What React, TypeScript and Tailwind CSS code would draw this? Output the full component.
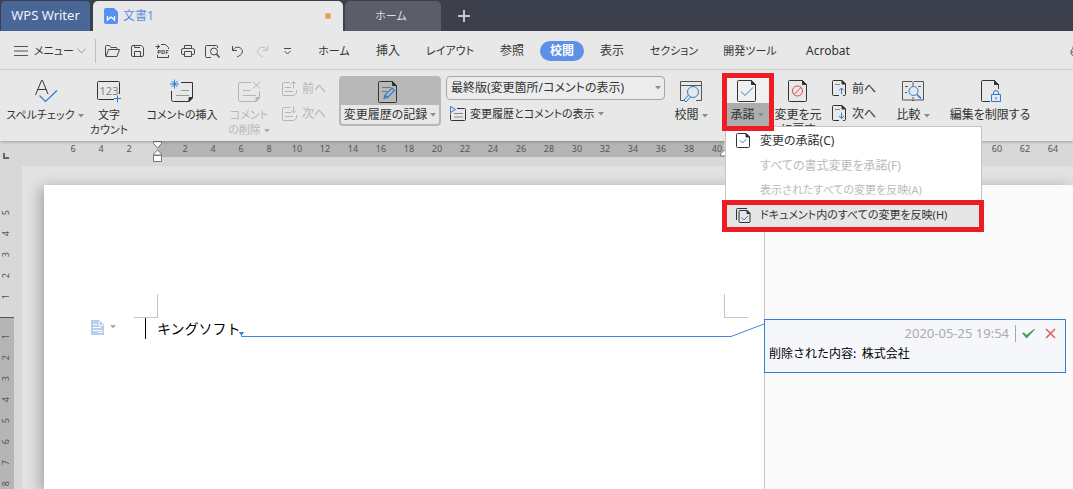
import type { ReactNode } from 'react';
import clsx from 'clsx';

const menus = [
  { label: 'ホーム', width: 'w-[56px]', small: true },
  { label: '挿入', width: 'w-[52px]' },
  { label: 'レイアウト', width: 'w-[72px]', small: true },
  { label: '参照', width: 'w-[52px]' },
  { label: '校閲', width: 'w-[44px]', active: true },
  { label: '表示', width: 'w-[52px]' },
  { label: 'セクション', width: 'w-[72px]', small: true },
  { label: '開発ツール', width: 'w-[80px]', small: true },
  { label: 'Acrobat', width: 'w-[76px]' },
];

// ruler labels, every second character; the stretch under the open menu stays blank
const rulerMarks = Array.from({ length: 36 }, (_, i) => i * 2 - 6).map((n) =>
  n === 0 || (n > 40 && n < 60) ? null : Math.abs(n),
);

type IconProps = { w?: number; h?: number; className?: string; children: ReactNode };

function Icon({ w = 24, h = 24, className, children }: IconProps) {
  return (
    <svg
      width={w}
      height={h}
      viewBox={`0 0 ${w} ${h}`}
      fill="none"
      stroke="currentColor"
      className={clsx('shrink-0 overflow-visible', className)}
      aria-hidden="true"
    >
      {children}
    </svg>
  );
}

function Caret({ className }: { className?: string }) {
  return (
    <svg width="6" height="4" viewBox="0 0 6 4" className={clsx('ml-[3px] inline-block shrink-0 align-middle', className)} aria-hidden="true">
      <path d="M0 0h6L3 3.5z" fill="#8c8c8c" />
    </svg>
  );
}

function DocOutline() {
  return (
    <>
      <path d="M3.5 1.5h13l4 4v16q0 1-1 1h-16q-1 0-1-1v-19q0-1 1-1z" />
      <path d="M16.5 1.500v4h4z" fill="currentColor" />
    </>
  );
}

function NoteOutline() {
  return (
    <>
      <path d="M11 3.500H22.500V19l-3.500 3.500H3.500q-2 0-2-2V12" />
      <path d="M22.500 18.500h-3.500v4z" fill="currentColor" />
      <path d="M11 11.500h8M6 16.500h13" stroke="#999" />
    </>
  );
}

type ToolProps = {
  icon: ReactNode;
  lines: string[];
  width: string;
  caret?: boolean;
  disabled?: boolean;
  small?: boolean;
};

function Tool({ icon, lines, width, caret, disabled, small }: ToolProps) {
  return (
    <button
      type="button"
      disabled={disabled}
      className={clsx('flex shrink-0 flex-col items-center gap-1 pt-[3px]', width, disabled && 'text-[#b5b5b5]')}
    >
      {icon}
      <span className={clsx('leading-[15px] whitespace-nowrap', small && 'text-[11px]')}>
        {lines.map((line, i) => (
          <span key={line} className="block">
            {line}
            {caret && i === lines.length - 1 && <Caret className={disabled ? 'opacity-60' : ''} />}
          </span>
        ))}
      </span>
    </button>
  );
}

function StepButton({ icon, label, disabled }: { icon: ReactNode; label: string; disabled?: boolean }) {
  return (
    <button type="button" disabled={disabled} className={clsx('flex h-[25px] items-center gap-1 whitespace-nowrap', disabled && 'text-[#b5b5b5]')}>
      {icon}
      {label}
    </button>
  );
}

function TabBar() {
  return (
    <header className="flex h-[31px] shrink-0 items-stretch bg-[#3c404c] pt-px text-[13px]">
      <button type="button" className="ml-px w-[89px] rounded-t-sm bg-[#486797] text-[#f0f4fa]">WPS Writer</button>
      <div className="ml-[3px] flex w-[250px] items-center rounded-t-[5px] bg-[#e8e8e8] pr-3 pl-[11px] text-[#5a8ce0]">
        <Icon w={14} h={16}>
          <path d="M2 0h8l4 4v10a2 2 0 0 1-2 2H2a2 2 0 0 1-2-2V2a2 2 0 0 1 2-2z" fill="#5690f2" stroke="none" />
          <path d="M3.500 8v4l3.500-3 3.500 3V8" stroke="#fff" strokeWidth="1.3" />
        </Icon>
        <span className="ml-[5px] text-[12px]">文書1</span>
        <span className="ml-auto size-[6px] rounded-full bg-[#e9a057]" />
      </div>
      <button type="button" className="ml-[2px] w-[96px] rounded-t-[5px] bg-[#5b5d68] pr-1 text-[11px] text-[#dcdde0]">ホーム</button>
      <button type="button" aria-label="新規" className="ml-4 text-[#c6c7cb]">
        <Icon w={14} h={14}>
          <path d="M7 1v12M1 7h12" strokeWidth="2" />
        </Icon>
      </button>
    </header>
  );
}

function QuickIcons() {
  return (
    <div className="flex text-[#4a4a4a] [&>button]:flex [&>button]:h-6 [&>button]:w-[25px] [&>button]:items-center [&>button]:justify-center">
      <button type="button" aria-label="開く">
        <Icon w={15} h={12}>
          <path d="M1 11.500L.5 10V1.500q0-1 1-1h3l1.500 2h5q1 0 1 1v1M1 11.500l2.500-7h11l-2.500 7z" strokeLinejoin="round" />
        </Icon>
      </button>
      <button type="button" aria-label="保存">
        <Icon w={13} h={12}>
          <path d="M.5 2q0-1.500 1.500-1.500h8.500l2 2V10q0 1.500-1.500 1.500H2Q.5 11.500.5 10zM3.500.5v2h5.500M3.500 11.500v-5h6v5" />
        </Icon>
      </button>
      <button type="button" aria-label="PDF">
        <Icon w={13} h={14}>
          <path d="M1.500 5V3.500M-.5 2.500h4M1.500.500l2 2-2 2M5 .5h4.500l3 3V5M1.500 11v2.500h11V11" />
          <text x="7" y="10" textAnchor="middle" fontSize="6" fontWeight="700" fontFamily="Noto Sans, sans-serif" fill="currentColor" stroke="none">PDF</text>
        </Icon>
      </button>
      <button type="button" aria-label="印刷">
        <Icon w={13} h={13}>
          <path d="M3.500 3.500v-3h7v3M3 9.500H2Q.5 9.500.5 8V5q0-1.500 1.500-1.500h9.500Q13.500 3.500 13.500 5v3q0 1.500-1.500 1.500h-1M3.500 6.500h7v5h-7z" />
        </Icon>
      </button>
      <button type="button" aria-label="印刷プレビュー">
        <Icon w={15} h={13}>
          <path d="M6 12.500H1.500q-1 0-1-1v-10q0-1 1-1h10q1 0 1 1V3" />
          <circle cx="9" cy="6.500" r="3.500" />
          <path d="M11.500 9l3 3.500" strokeWidth="1.400" />
        </Icon>
      </button>
      <button type="button" aria-label="元に戻す">
        <Icon w={13} h={13}>
          <path d="M1.500 1v4.500H6M1.500 5.500C4 1.500 8 1.500 10 3.500c3 3 1 6.500-4 8.500" />
        </Icon>
      </button>
      <button type="button" aria-label="やり直し" className="text-[#bcbcbc]">
        <Icon w={13} h={13}>
          <path d="M11.500 1v4.500H7M11.500 5.500C9 1.500 5 1.500 3 3.500c-3 3-1 6.500 4 8.500" />
        </Icon>
      </button>
      <button type="button" aria-label="その他">
        <Icon w={7} h={7}>
          <path d="M0 .5h7M.5 3l3 3 3-3" />
        </Icon>
      </button>
    </div>
  );
}

function MenuBar() {
  return (
    <nav className="flex h-[39px] shrink-0 items-center overflow-hidden border-b border-[#d6d6d6] bg-[#e8e8e8] pt-[2px] whitespace-nowrap">
      <button type="button" className="flex w-[95px] shrink-0 items-center pl-[14px]">
        <Icon w={14} h={10} className="text-[#555]">
          <path d="M0 .5h14M0 5h14M0 9.500h14" />
        </Icon>
        <span className="ml-[6px] w-[37px] text-left text-[11px]">メニュー</span>
        <Icon w={9} h={6} className="ml-[6px] text-[#999]">
          <path d="M.5.5l4 4.500 4-4.500" />
        </Icon>
      </button>
      <span className="mr-1 h-6 w-px bg-[#bdbdbd]" />
      <QuickIcons />
      <div className="ml-[6px] flex items-center">
        {menus.map((m) => (
          <button
            key={m.label}
            type="button"
            className={clsx(
              'h-5 shrink-0',
              m.width,
              m.small && 'text-[11px]',
              m.active && 'mx-[2px] rounded-full bg-[#5d90e6] font-bold text-white',
            )}
          >
            {m.label}
          </button>
        ))}
      </div>
      <button type="button" aria-label="同期" className="ml-auto w-[3px] shrink-0 overflow-hidden text-[#555]">
        <Icon w={14} h={14}>
          <path d="M4.500 12A4 4 0 0 1 3 4.500 4 4 0 0 1 11 4M1 8h5" />
        </Icon>
      </button>
    </nav>
  );
}

function AcceptMenu() {
  const items = [
    { label: '変更の承諾(C)', icon: 'single' },
    { label: 'すべての書式変更を承諾(F)', disabled: true },
    { label: '表示されたすべての変更を反映(A)', disabled: true, small: true },
    { label: 'ドキュメント内のすべての変更を反映(H)', icon: 'multi', small: true },
  ];
  return (
    <div role="menu" className="absolute top-[50px] left-0 z-20 w-[257px] border border-[#c4c4c4] bg-white pt-px pb-[3px]">
      {items.map((item) => (
        <button
          key={item.label}
          type="button"
          role="menuitem"
          disabled={item.disabled}
          className={clsx(
            'relative flex h-[25px] w-full items-center pl-[10px] text-left whitespace-nowrap',
            item.small && 'text-[11px]',
            item.disabled && 'text-[#bababa]',
            item.icon === 'multi' && 'bg-[#e6e6e6]',
          )}
        >
          <span className="w-6">
            {item.icon && (
              <Icon w={15} h={15} className="text-[#333]">
                {item.icon === 'single' ? (
                  <>
                    <path d="M1.500.5H10l3.500 3.500v9.500q0 1-1 1h-11q-1 0-1-1v-12q0-1 1-1z" />
                    <path d="M10 .5v3.500h3.500z" fill="currentColor" />
                    <path d="M4 7.500l2.500 2.500 4-4" stroke="#2b7cd3" />
                  </>
                ) : (
                  <>
                    <path d="M.5 12V1.500q0-1 1-1H11M4 2.500h7l3 3v8q0 1-1 1H4q-1 0-1-1v-10q0-1 1-1z" />
                    <path d="M11 2.500v3h3z" fill="currentColor" />
                    <path d="M5.500 9.500l2.500 2.500 4-4" stroke="#2b7cd3" />
                  </>
                )}
              </Icon>
            )}
          </span>
          {item.label}
          {item.icon === 'multi' && (
            <span className="pointer-events-none absolute top-[-3px] left-[-4px] h-8 w-[262px] border-[5px] border-[#ee1c25]" />
          )}
        </button>
      ))}
    </div>
  );
}

function StepDoc() {
  return (
    <>
      <path d="M8 15.500H2.500q-1 0-1-1v-13q0-1 1-1H11l3.500 3.500v10.500q0 1-1 1H12" />
      <path d="M11 .5v3.500h3.500z" fill="currentColor" />
      <path d="M4 4.500h5" stroke="#888" />
    </>
  );
}

function Ribbon() {
  return (
    <section className="relative z-10 flex h-[71px] shrink-0 items-start bg-[#e8e8e8] pt-[6px] pl-[5px] shadow-[0_1px_3px_rgba(0,0,0,0.25)]">
      <Tool
        width="w-[80px]"
        caret
        small
        lines={['スペルチェック']}
        icon={
          <Icon>
            <path d="M2.500 16L8.500 1.500h1L15 15M4.500 10.500h8.500" />
            <path d="M6.500 16.500l6 6L24 11.500" stroke="#2b7cd3" strokeWidth="1.200" />
          </Icon>
        }
      />
      <Tool
        width="w-[48px]"
        small
        lines={['文字', 'カウント']}
        icon={
          <Icon>
            <path d="M17 20.500H1.500q-1 0-1-1V3.500q0-1 1-1h20q1 0 1 1V15" />
            <text x="12" y="16" textAnchor="middle" fontSize="11" fontFamily="Noto Sans, sans-serif" fill="#858585" stroke="none">123</text>
            <path d="M20.500 16.500v7M17 19.500h7" stroke="#2b7cd3" />
          </Icon>
        }
      />
      <div className="ml-1 flex">
        <Tool
          width="w-[90px]"
          small
          lines={['コメントの挿入']}
          icon={
            <Icon>
              <NoteOutline />
              <path d="M4.500.5v9M0 5h9M1.500 2l6 6M7.500 2l-6 6" stroke="#2b7cd3" />
            </Icon>
          }
        />
        <Tool
          width="w-[44px]"
          small
          lines={['コメント', 'の削除']}
          caret
          disabled
          icon={
            <Icon>
              <path d="M14 3.500H2.500q-1 0-1 1V20.500q0 2 2 2H19l3.500-3.500V12" />
              <path d="M22.500 18.500h-3.500v4z" fill="currentColor" />
              <path d="M6 11.500h8M6 16.500h13M16 2.500l7 7M23 2.500l-7 7" />
            </Icon>
          }
        />
      </div>
      <div className="ml-[10px] w-[46px] shrink-0">
        <StepButton
          disabled
          label="前へ"
          icon={
            <Icon w={17} h={16}>
              <path d="M9 1.500H2.500q-1 0-1 1v11q0 1 1 1H13l2.500-2.500V9M4 6.500h6M4 10.500h8M12.500 7.500v-7M10 3L12.500.5 15 3" />
            </Icon>
          }
        />
        <StepButton
          disabled
          label="次へ"
          icon={
            <Icon w={17} h={16}>
              <path d="M9 1.500H2.500q-1 0-1 1v11q0 1 1 1H13l2.500-2.500V9M4 6.500h6M4 10.500h8M12.500 0v6.500M10 4.500l2.500 2.500L15 4.500" />
            </Icon>
          }
        />
      </div>
      <button type="button" aria-pressed="true" className="ml-3 flex h-[50px] w-[102px] shrink-0 flex-col items-center rounded-[4px] border-2 border-[#b8b8b8] bg-[#b8b8b8]">
        <span className="flex h-[27px] items-center pr-1">
          <Icon>
            <DocOutline />
            <path d="M6 7.500h9M6 11.500h5" stroke="#777" />
            <path d="M8 18.500l1-3.500 7-7 2.500 2.500-7 7zM9 15l2.500 2.500" stroke="#2b7cd3" strokeWidth="1.200" />
          </Icon>
        </span>
        <span className="flex w-full flex-1 items-center justify-center rounded-b-[2px] bg-[#e8e8e8] whitespace-nowrap">
          変更履歴の記録
          <Caret />
        </span>
      </button>
      <div className="ml-[5px] w-[219px] shrink-0">
        <div className="relative">
          <select aria-label="表示モード" className="block h-6 w-full appearance-none rounded-[4px] border border-[#a6a6a6] bg-[#ececec] pl-[4px]">
            <option>最終版(変更箇所/コメントの表示)</option>
          </select>
          <Caret className="pointer-events-none absolute top-[10px] right-[4px]" />
        </div>
        <button type="button" className="mt-[2px] flex h-6 items-center pl-[3px] text-[11px] whitespace-nowrap">
          <Icon w={17} h={16} className="mr-1">
            <path d="M8 2.500h7.500q1 0 1 1v10q0 1-1 1h-13q-1 0-1-1V9" />
            <path d="M5 7.500h9M5 11h9" stroke="#888" />
            <path d="M1.500 9V.5L6.500 3.500l-5 3" stroke="#2b7cd3" />
          </Icon>
          変更履歴とコメントの表示
          <Caret className="ml-1" />
        </button>
      </div>
      <div className="ml-2 flex">
        <Tool
          width="w-[36px]"
          caret
          lines={['校閲']}
          icon={
            <Icon>
              <path d="M5 21.500H1.500v-19h21v19H17M1.500 6.500h21" stroke="#555" />
              <circle cx="14" cy="13" r="5.500" stroke="#2b7cd3" />
              <path d="M9.500 16l-4.500 5 2 2 4.500-5" stroke="#2b7cd3" />
            </Icon>
          }
        />
      </div>
      <div className="relative ml-4 h-[50px] w-[44px] shrink-0">
        <button type="button" aria-haspopup="menu" aria-expanded="true" className="flex h-full w-full flex-col items-center bg-[#f0f0f0] pt-[3px]">
          <Icon>
            <DocOutline />
            <path d="M6 12.500l4 4 8-8" stroke="#2b7cd3" />
          </Icon>
          <span className="flex w-full flex-1 items-center justify-center bg-[#adadad] whitespace-nowrap">
            承諾
            <Caret />
          </span>
        </button>
        <AcceptMenu />
        <span className="pointer-events-none absolute top-[-3px] left-[-3px] z-30 h-[58px] w-[52px] border-[5px] border-[#ee1c25]" />
      </div>
      <div className="ml-[5px] flex">
        <Tool
          width="w-[48px]"
          lines={['変更を元', 'に戻す']}
          icon={
            <Icon>
              <DocOutline />
              <circle cx="11.500" cy="12" r="5" stroke="#e0484d" />
              <path d="M8 15.500l7-7" stroke="#e0484d" />
            </Icon>
          }
        />
      </div>
      <div className="ml-[9px] w-[46px] shrink-0">
        <StepButton
          label="前へ"
          icon={
            <Icon w={17} h={17}>
              <StepDoc />
              <path d="M10.500 14V8M8 10.500L10.500 8l2.500 2.500" stroke="#2b7cd3" />
            </Icon>
          }
        />
        <StepButton
          label="次へ"
          icon={
            <Icon w={17} h={17}>
              <StepDoc />
              <path d="M10.500 7.500v6M8 11l2.500 2.500L13 11" stroke="#2b7cd3" />
            </Icon>
          }
        />
      </div>
      <div className="ml-4 flex gap-4">
        <Tool
          width="w-[40px]"
          caret
          lines={['比較']}
          icon={
            <Icon>
              <path d="M12 3.500l-1-1H1.500v18.500H11l1 1 1-1h9.500V2.500H13zM12 4v3M12 18v4M4 7.500h3M17 7.500h3M4 13.500h2" stroke="#555" />
              <circle cx="12.500" cy="12" r="4.500" stroke="#2b7cd3" />
              <path d="M16 15.500l4 4" stroke="#2b7cd3" strokeWidth="1.600" />
            </Icon>
          }
        />
        <Tool
          width="w-[82px]"
          lines={['編集を制限する']}
          icon={
            <Icon>
              <path d="M12 22.500H4.500q-1 0-1-1v-19q0-1 1-1h12l4 4V10" />
              <path d="M16.500 1.500v4h4z" fill="currentColor" />
              <path d="M13.500 15.500h9v7h-9zM15.500 15.500V14q0-2.500 2.500-2.500t2.500 2.500v1.500M18 18v2.500" stroke="#2b7cd3" />
            </Icon>
          }
        />
      </div>
    </section>
  );
}

function HorizontalRuler() {
  return (
    <div className="relative flex h-[25px] shrink-0 items-start overflow-hidden bg-[#d8d8d8] text-[9px] text-[#555]">
      <Icon w={6} h={6} className="mt-3 ml-[3px] text-[#666]">
        <path d="M1 0v5h5" strokeWidth="2" />
      </Icon>
      <div className="ml-[50px] flex h-4 bg-[linear-gradient(to_right,transparent_98px,#b5b5b5_98px,#b5b5b5_665px,transparent_665px)]">
        {rulerMarks.map((n, i) => (
          <span key={i} className="w-7 shrink-0 text-center leading-4">
            {n}
          </span>
        ))}
      </div>
      <Icon w={11} h={22} className="absolute top-0 left-[152px] text-[#777]">
        <path d="M1.500.5h8v2L5.500 7l-4-4.500zM5.500 9l4 4v1h-8v-1zM1.500 14.500h8v6h-8z" fill="#fff" />
      </Icon>
      <Icon w={11} h={16} className="absolute top-0 left-[719px] text-[#777]">
        <path d="M5.500 9l4 4v2h-8v-2z" fill="#fff" />
      </Icon>
    </div>
  );
}

function VerticalRuler() {
  const digit = 'flex h-[21px] items-center justify-center pr-[2px]';
  return (
    <div className="flex w-[14px] shrink-0 flex-col text-[9px] text-[#555]">
      <div className="h-[152px] shrink-0 border-b border-[#555] pt-9">
        {[5, 4, 3, 2, 1].map((n) => (
          <div key={n} className={digit}>
            <span className="-rotate-90">{n}</span>
          </div>
        ))}
      </div>
      <div className="flex-1 bg-[#b5b5b5] pt-2">
        {[1, 2, 3, 4, 5, 6, 7, 8].map((n) => (
          <div key={n} className={digit}>
            <span className="-rotate-90">{n}</span>
          </div>
        ))}
      </div>
    </div>
  );
}

function Page() {
  return (
    <article className="relative w-[720px] shrink-0 bg-white pt-[109px]">
      <div className="flex justify-between pr-4 pl-[90px]">
        <span className="size-6 border-r border-b border-[#c4c4c4]" />
        <span className="size-6 border-b border-l border-[#c4c4c4]" />
      </div>
      <div className="flex h-[21px] items-center pl-[47px]">
        <button type="button" aria-label="段落オプション" className="flex items-center pb-[3px]">
          <Icon w={13} h={15}>
            <path d="M0 0h8l5 5v10H0z" fill="#b9cdea" stroke="none" />
            <path d="M8 1v4.500h4M2 4.500h4M2 7.500h8M2 10.500h9v2H7" stroke="#fff" />
          </Icon>
          <Caret className="ml-[6px] opacity-70" />
        </button>
        <span className="ml-[29px] h-[21px] w-px bg-black" />
        <p className="ml-[11px] font-['Noto_Sans_CJK_JP',sans-serif] text-[14px] leading-[21px] text-black [font-feature-settings:normal]">キングソフト</p>
      </div>
      <svg width="523" height="20" viewBox="0 0 523 20" fill="none" className="absolute top-[136px] left-[197px] overflow-visible" aria-hidden="true">
        <path d="M-2 11h5l-2.500 4z" fill="#2f80d6" />
        <path d="M.5 11v4.500H490L523 3" stroke="#3d89da" />
      </svg>
    </article>
  );
}

function CommentPane() {
  return (
    <aside className="flex-1 border-l border-[#c4c4c4] bg-[#fafafa] pt-[134px] pr-[7px]">
      <div className="-ml-px h-[54px] border border-[#2f80d6] bg-[#f5f7fa] pt-1 pl-1">
        <div className="flex h-[19px] items-center justify-end pr-[9px]">
          <time className="text-[13px] text-[#ababab]">2020-05-25 19:54</time>
          <span className="ml-[6px] h-[17px] w-px bg-[#a8a8a8]" />
          <button type="button" aria-label="承諾" className="ml-[5px]">
            <Icon w={15} h={11}>
              <path d="M1 5l2-.5L5.500 7 13 1l1 .5-8.500 9z" fill="#3f9b56" stroke="none" />
            </Icon>
          </button>
          <button type="button" aria-label="拒否" className="ml-[9px]">
            <Icon w={11} h={11}>
              <path d="M1 1l9 9M10 1l-9 9" stroke="#e0605c" strokeWidth="1.600" />
            </Icon>
          </button>
        </div>
        <p className="font-['Noto_Sans_CJK_JP',sans-serif] leading-5 text-black [font-feature-settings:normal]">削除された内容:&nbsp; 株式会社</p>
      </div>
    </aside>
  );
}

export default function App() {
  return (
    <div className="flex h-screen flex-col overflow-hidden bg-[#d8d8d8] font-['Noto_Sans','Noto_Sans_CJK_JP',sans-serif] text-[12px] text-[#333] [font-feature-settings:'palt']">
      <TabBar />
      <MenuBar />
      <Ribbon />
      <HorizontalRuler />
      <main className="flex min-h-0 flex-1">
        <VerticalRuler />
        <div className="ml-2 flex min-w-0 flex-1 overflow-hidden bg-[#e2e2e2] pt-[19px] pl-[22px]">
          <div className="flex min-w-0 flex-1 shadow-[-3px_3px_14px_rgba(0,0,0,0.3)]">
            <Page />
            <CommentPane />
          </div>
        </div>
      </main>
    </div>
  );
}
